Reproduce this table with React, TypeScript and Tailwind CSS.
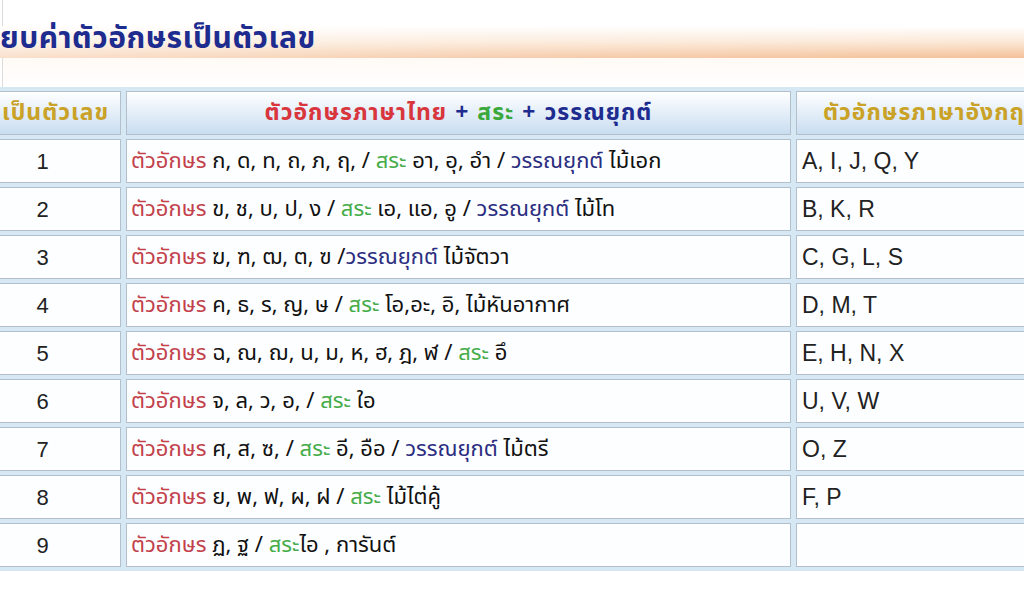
import React from "react";

interface Row {
    num: string;
    letters: string;
    vowel?: string;
    tone?: string;
    english: string;
}

const rows: Row[] = [
    { num: "1", letters: " ก, ด, ท, ถ, ภ, ฤ, / ", vowel: " อา, อุ, อำ / ", tone: " ไม้เอก", english: "A, I, J, Q, Y" },
    { num: "2", letters: " ข, ช, บ, ป, ง / ", vowel: " เอ, แอ, อู / ", tone: " ไม้โท", english: "B, K, R" },
    { num: "3", letters: " ฆ, ฑ, ฒ, ต, ฃ /", tone: " ไม้จัตวา", english: "C, G, L, S" },
    { num: "4", letters: " ค, ธ, ร, ญ, ษ / ", vowel: " โอ,อะ, อิ, ไม้หันอากาศ", english: "D, M, T" },
    { num: "5", letters: " ฉ, ณ, ฌ, น, ม, ห, ฮ, ฎ, ฬ / ", vowel: " อึ", english: "E, H, N, X" },
    { num: "6", letters: " จ, ล, ว, อ, / ", vowel: " ใอ", english: "U, V, W" },
    { num: "7", letters: " ศ, ส, ซ, / ", vowel: " อี, อือ / ", tone: " ไม้ตรี", english: "O, Z" },
    { num: "8", letters: " ย, พ, ฟ, ผ, ฝ / ", vowel: " ไม้ไต่คู้", english: "F, P" },
    { num: "9", letters: " ฏ, ฐ / ", vowel: "ไอ , การันต์", english: "" },
];

const thai = { fontFamily: '"Tahoma", "Noto Sans Thai", "Loma", "Garuda", "Sawasdee", "Norasi", sans-serif' };
const latin = { fontFamily: '"Liberation Sans", Arial, sans-serif' };

const cell = "h-[44px] bg-[#fdfeff] border border-[#b3bfcb] flex items-center";
const head = "h-[44px] border border-[#b3bfcb] bg-gradient-to-b from-white to-[#c9ddf1] flex items-center font-bold text-[23px] tracking-[1px] whitespace-nowrap overflow-hidden";

export default function App() {
    return (
        <div className="w-[1024px] h-[599px] overflow-hidden bg-white" style={thai}>
            <div className="h-[26px] ml-[2px] border-l border-[#dcdcdc]" />
            <div className="relative h-[32px] bg-gradient-to-b from-white via-[#fbe8d6] to-[#f4c199]">
                <div className="absolute inset-0 bg-gradient-to-r from-white/50 via-white/20 to-transparent" />
                <h1 className="relative text-[30px] leading-[26px] font-bold text-[#1f2c8f] tracking-[0.5px]">
                    ยบค่าตัวอักษรเป็นตัวเลข
                </h1>
            </div>
            <div className="h-[29px] ml-[2px] border-l border-[#dcdcdc] bg-gradient-to-b from-[#fffaf5] to-white" />

            <div className="grid grid-cols-[121px_665px_320px] gap-x-[5px] gap-y-[4px] bg-[#d5e8f3] py-[4px]">
                <div className={`${head} border-l-0 text-[#c9a227] pl-[2px]`}>เป็นตัวเลข</div>
                <div className={`${head} justify-center`}>
                    <span className="text-[#d8353d]">ตัวอักษรภาษาไทย</span>
                    <span className="text-[#1f2c8f] px-[8px]">+</span>
                    <span className="text-[#3aa83a]">สระ</span>
                    <span className="text-[#1f2c8f] px-[8px]">+</span>
                    <span className="text-[#1f2c8f]">วรรณยุกต์</span>
                </div>
                <div className={`${head} border-r-0 text-[#c9a227] pl-[26px]`}>ตัวอักษรภาษาอังกฤษ</div>

                {rows.map((r) => (
                    <React.Fragment key={r.num}>
                        <div className={`${cell} border-l-0 justify-center pr-[35px] text-[22px] text-[#222]`} style={latin}>
                            {r.num}
                        </div>
                        <div className={`${cell} pl-[4px] text-[22px] text-[#111] whitespace-pre`}>
                            <span className="text-[#c2414b]">ตัวอักษร</span>
                            <span>{r.letters}</span>
                            {r.vowel !== undefined && (
                                <>
                                    <span className="text-[#46ad4a]">สระ</span>
                                    <span>{r.vowel}</span>
                                </>
                            )}
                            {r.tone !== undefined && (
                                <>
                                    <span className="text-[#2b2d80]">วรรณยุกต์</span>
                                    <span>{r.tone}</span>
                                </>
                            )}
                        </div>
                        <div className={`${cell} border-r-0 pl-[5px] text-[23px] text-[#222]`} style={latin}>
                            {r.english}
                        </div>
                    </React.Fragment>
                ))}
            </div>
        </div>
    );
}
